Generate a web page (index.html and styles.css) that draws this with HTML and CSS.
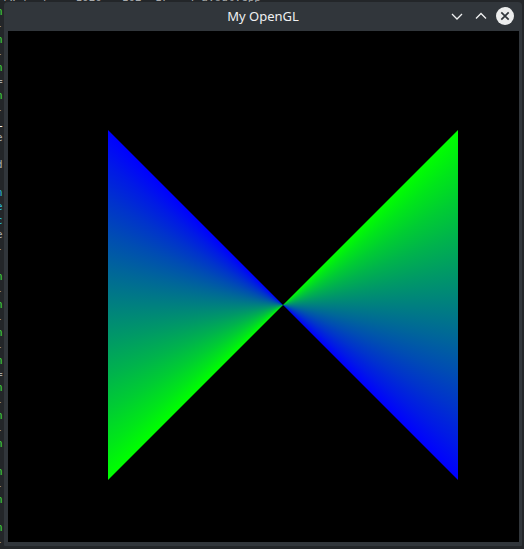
FILE: index.html
```html
<!DOCTYPE html>
<html>
<head>
<meta charset="utf-8">
<title>My OpenGL</title>
<link rel="stylesheet" href="styles.css">
</head>
<body>
<div class="desktop">
<pre class="term"><span class="g">-rw-r--r--  1020   102  17   4 a.out.cpp</span>
<span class="gn">n</span>
<span class="g">-</span>
<span class="gn">n</span>
<span class="g">-</span>
<span class="gn">n</span>
<span class="g">=</span>
<span class="gn">n</span>
<span class="g">-</span>
<span class="w">L</span>
<span class="g">e</span>

<span class="g">d</span>

<span class="cy">n</span>
<span class="cy">e</span>
<span class="cy">c</span>
<span class="g">e</span>
<span class="g">-</span>

<span class="gn">n</span>
<span class="g">-</span>
<span class="gn">n</span>
<span class="g">-</span>
<span class="gn">n</span>
<span class="g">-</span>
<span class="gn">n</span>
<span class="g">=</span>
<span class="gn">n</span>
<span class="g">-</span>
<span class="gn">n</span>
<span class="g">-</span>
<span class="gn">n</span>

<span class="gn">n</span>
<span class="g">-</span>
<span class="gn">n</span>

<span class="gn">n</span>
<span class="g">-</span>
<span class="g">  d                         dl d</span></pre>

<div class="window">
  <div class="titlebar">
    <span class="spacer"></span>
    <span class="title">My OpenGL</span>
    <div class="controls">
      <svg class="btn" viewBox="0 0 18 18" width="18" height="18"><polyline points="4,7 9,12 14,7" fill="none" stroke="#eff0f1" stroke-width="1.3"/></svg>
      <svg class="btn" viewBox="0 0 18 18" width="18" height="18"><polyline points="4,11.5 9,6.5 14,11.5" fill="none" stroke="#eff0f1" stroke-width="1.3"/></svg>
      <svg class="btn" viewBox="0 0 18 18" width="18" height="18"><circle cx="9" cy="9" r="9" fill="#eceded"/><path d="M5.3 5.3 L12.7 12.7 M12.7 5.3 L5.3 12.7" stroke="#31363b" stroke-width="1.7" fill="none"/></svg>
    </div>
  </div>
  <div class="gl">
    <div class="quad"></div>
  </div>
</div>
</div>
</body>
</html>
```
FILE: styles.css
```css
html, body {
  margin: 0;
  padding: 0;
  background: #232629;
}
.desktop {
  position: relative;
  width: 524px;
  height: 549px;
  overflow: hidden;
  background: #232629;
}
.term {
  margin: -8.8px 0 0 -4px;
  font-family: "DejaVu Sans Mono", "Liberation Mono", monospace;
  font-size: 11px;
  line-height: 13.94px;
  color: #b9bcbe;
}
.term .g { color: #a8abad; }
.term .w { color: #eff0f1; }
.term .gn { color: #3fdc3f; }
.term .cy { color: #2ab8d8; }

.window {
  position: absolute;
  left: 4px;
  top: 2px;
  width: 518px;
  box-sizing: border-box;
  padding: 0 3px 4px 4px;
  background: #31363b;
  border-radius: 4px 4px 1px 1px;
}
.titlebar {
  height: 29px;
  display: grid;
  grid-template-columns: 1fr auto 1fr;
  align-items: center;
  margin: 0 -3px 0 -4px;
}
.title {
  font-family: "Noto Sans", "Open Sans", sans-serif;
  font-size: 13px;
  color: #eff0f1;
  line-height: 29px;
  padding-top: 0px;
}
.controls {
  justify-self: end;
  display: flex;
  gap: 6px;
  padding-right: 8px;
  align-items: center;
  margin-top: -1px;
}
.btn { display: block; }

.gl {
  width: 511px;
  height: 511px;
  box-sizing: border-box;
  padding: 99px 0 0 100px;
  background: #000;
}
.quad {
  width: 350px;
  height: 350px;
  clip-path: polygon(0 0, 0 100%, 100% 0, 100% 100%);
  background: conic-gradient(at 50% 50%,
    rgb(0 255 0) 45deg,
    rgb(0 229.5 25.5) 51.34deg,
    rgb(0 204 51) 59.04deg,
    rgb(0 178.5 76.5) 68.2deg,
    rgb(0 153 102) 78.69deg,
    rgb(0 127.5 127.5) 90deg,
    rgb(0 102 153) 101.31deg,
    rgb(0 76.5 178.5) 111.8deg,
    rgb(0 51 204) 120.96deg,
    rgb(0 25.5 229.5) 128.66deg,
    rgb(0 0 255) 135deg,
    rgb(0 255 0) 225deg,
    rgb(0 229.5 25.5) 231.34deg,
    rgb(0 204 51) 239.04deg,
    rgb(0 178.5 76.5) 248.2deg,
    rgb(0 153 102) 258.69deg,
    rgb(0 127.5 127.5) 270deg,
    rgb(0 102 153) 281.31deg,
    rgb(0 76.5 178.5) 291.8deg,
    rgb(0 51 204) 300.96deg,
    rgb(0 25.5 229.5) 308.66deg,
    rgb(0 0 255) 315deg);
}
```
